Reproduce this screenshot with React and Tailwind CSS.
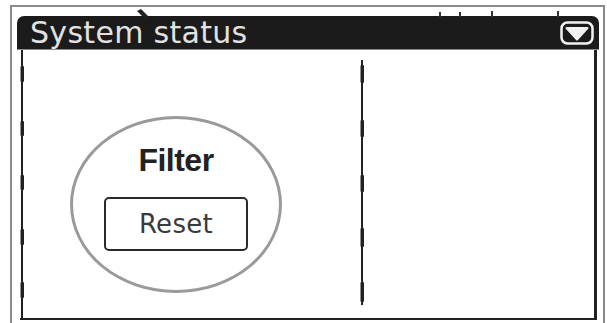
import React from 'react';

// thick segments on the dashed axes, in px from the top of each svg
const leftTicks = [[16, 32], [71, 86], [125, 140], [179, 195], [232, 248]];
const midTicks = [[15, 33], [70, 87], [125, 142], [178, 197], [232, 252]];

const Axis = ({ height, from, to, ticks }) => (
  <svg width="4" height={height} className="block shrink-0">
    <line x1="2" y1={from} x2="2" y2={to} stroke="#222" strokeWidth="2" />
    {ticks.map(([a, b], i) => (
      <rect key={i} x="0.5" y={a} width="3.5" height={b - a} rx="1" fill="#222" />
    ))}
  </svg>
);

const DropIcon = () => (
  <svg width="34" height="24" viewBox="0 0 34 24" className="block">
    <rect x="1.5" y="1.5" width="31" height="21" rx="6" fill="none" stroke="#f2f2f2" strokeWidth="2.5" />
    <polygon points="6.5,7 27.5,7 17,18.5" fill="#f2f2f2" stroke="#f2f2f2" strokeWidth="2" strokeLinejoin="round" />
  </svg>
);

export default function App() {
  return (
    <div className="relative w-[607px] h-[323px] overflow-hidden bg-white">
      <div className="ml-[10px] mt-[5px] w-[595px] h-[340px] border-l-2 border-t-2 border-r-2 border-[#8a8a8a]">
        <div className="ml-[5px] mt-[9px] flex flex-col">
          {/* title bar */}
          <div className="w-[582px] h-[34px] bg-[#1b1b1b] rounded-t-[7px] border-b border-[#8c8c8c] flex items-center justify-between">
            <span
              className="pl-[13px] text-[30px] leading-[33px] tracking-[0.3px] text-[#e2e2e2]"
              style={{ fontFamily: '"DejaVu Sans", sans-serif' }}
            >
              System status
            </span>
            <div className="mr-[5px]">
              <DropIcon />
            </div>
          </div>

          {/* body */}
          <div className="ml-[3px] w-[577px] flex border-r-[3px] border-b-2 border-[#222]">
            <Axis height={268} from={0} to={268} ticks={leftTicks} />
            <div className="w-[336px] h-[266px]">
              <div className="ml-[46px] mt-[66px] w-[212px] h-[177px] rounded-[50%] border-[3px] border-[#9a9a9a] flex flex-col items-center pt-[25px]">
                <div
                  className="text-[32px] leading-none font-bold tracking-[-0.5px] text-[#222]"
                  style={{ fontFamily: '"Liberation Sans", Arial, sans-serif' }}
                >
                  Filter
                </div>
                <div className="mt-[21px] w-[144px] h-[54px] border-2 border-[#2a2a2a] rounded-[5px] flex items-center justify-center">
                  <span
                    className="text-[26px] leading-none tracking-[0.3px] text-[#3a3a3a]"
                    style={{ fontFamily: '"DejaVu Sans", sans-serif' }}
                  >
                    Reset
                  </span>
                </div>
              </div>
            </div>
            <Axis height={266} from={10} to={255} ticks={midTicks} />
            <div className="flex-1" />
          </div>
        </div>
      </div>

      {/* small marks sitting over the top frame */}
      <svg width="607" height="20" className="absolute left-0 top-0 pointer-events-none">
        <path d="M137 11 L141 9 L148 16 L144 18 Z" fill="#222" />
        <line x1="440" y1="12" x2="440" y2="17" stroke="#333" strokeWidth="2" />
        <line x1="460" y1="12" x2="460" y2="17" stroke="#333" strokeWidth="2" />
        <line x1="492" y1="11" x2="492" y2="17" stroke="#333" strokeWidth="2" />
        <line x1="558" y1="11" x2="558" y2="17" stroke="#333" strokeWidth="2" />
      </svg>
    </div>
  );
}
